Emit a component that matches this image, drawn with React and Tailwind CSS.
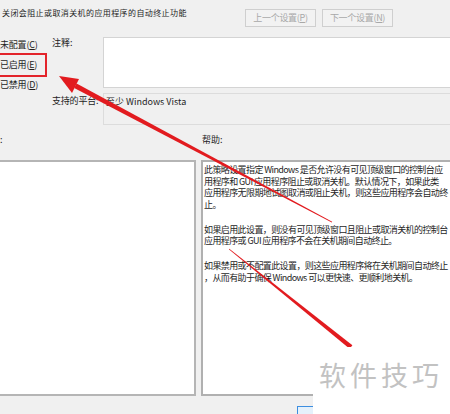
import React from "react";

const HELP = [
  [
    "此策略设置指定 Windows 是否允许没有可见顶级窗口的控制台应",
    "用程序和 GUI 应用程序阻止或取消关机。默认情况下，如果此类",
    "应用程序无限期地试图取消或阻止关机，则这些应用程序会自动终",
    "止。",
  ],
  [
    "如果启用此设置，则没有可见顶级窗口且阻止或取消关机的控制台",
    "应用程序或 GUI 应用程序不会在关机期间自动终止。",
  ],
  [
    "如果禁用或不配置此设置，则这些应用程序将在关机期间自动终止",
    "，从而有助于确保 Windows 可以更快速、更顺利地关机。",
  ],
];

const RADIOS = [
  { label: "未配置", key: "C" },
  { label: "已启用", key: "E" },
  { label: "已禁用", key: "D" },
];

function NavButton({ label, hotkey }) {
  return (
    <div className="mt-[9px] flex h-[18px] w-[71px] items-center justify-center border border-[#cfcfcf] bg-[#f2f2f2] tracking-[-0.3px] text-[#a8a8a8]">
      {label}(<u>{hotkey}</u>)
    </div>
  );
}

function Arrows() {
  return (
    <svg
      className="pointer-events-none absolute left-0 top-0"
      width="450"
      height="414"
      viewBox="0 0 450 414"
    >
      {/* arrow pointing at the enabled option */}
      <polygon points="59,76 79,79 72,93" fill="#e21b1f" />
      <polygon
        points="74.2,88 76.6,83.6 332.2,221.7 331.8,222.4"
        fill="#e21b1f"
      />
      {/* second stroke, tail under the watermark */}
      <polygon
        points="228.8,249.3 229.3,248.7 352.4,345.2 349.6,348.8"
        fill="#e21b1f"
      />
    </svg>
  );
}

export default function App() {
  return (
    <div
      className="relative h-[414px] w-[450px] overflow-hidden bg-[#f0f0f0] text-[9px] leading-[12px] text-[#1e1e1e]"
      style={{ fontFamily: '"Noto Sans CJK SC", "Noto Sans", sans-serif' }}
    >
      <div className="-ml-[20px] flex w-[520px] flex-col">
        {/* header */}
        <div className="flex h-[37px] items-start">
          <div className="mt-[7px] w-[265px] whitespace-nowrap pl-[22px] text-[8px] tracking-[0.4px]">
            关闭会阻止或取消关机的应用程序的自动终止功能
          </div>
          <div className="flex gap-[6px]">
            <NavButton label="上一个设置" hotkey="P" />
            <NavButton label="下一个设置" hotkey="N" />
          </div>
        </div>

        {/* options + comment */}
        <div className="flex">
          <div className="-mt-[2px] flex w-[72px] flex-col pl-[4px]">
            {RADIOS.map((r) => (
              <div key={r.key} className="flex h-[20px] items-center gap-[5px]">
                <span className="h-[11px] w-[11px] rounded-full border border-[#333] bg-white" />
                <span className="whitespace-nowrap tracking-[-0.2px]">
                  {r.label}(<u>{r.key}</u>)
                </span>
              </div>
            ))}
          </div>
          <div className="flex flex-1 flex-col">
            <div className="flex">
              <div className="w-[51px] whitespace-nowrap">注释:</div>
              <div className="h-[51px] flex-1 border border-[#d4d4d4] bg-white" />
            </div>
            <div className="mt-[5px] flex">
              <div className="w-[51px] whitespace-nowrap pt-[2px] tracking-[-0.2px]">支持的平台:</div>
              <div className="h-[32px] flex-1 whitespace-nowrap border border-[#dcdcdc] pl-[2px] pt-[2px]">
                至少 Windows Vista
              </div>
            </div>
          </div>
        </div>

        {/* panel labels */}
        <div className="mt-[9px] flex h-[12px]">
          <div className="w-[222px] pl-[2px]">选项:</div>
          <div>帮助:</div>
        </div>

        {/* panels */}
        <div className="mt-[14px] flex h-[236px] gap-[5px]">
          <div className="w-[216px] border-2 border-[#b5b5b5] bg-white" />
          <div className="w-[280px] overflow-hidden border-2 border-[#b0b0b0] bg-white pl-[1px] pt-[2px] leading-[11.5px] tracking-[-0.6px]">
            {HELP.map((para, i) => (
              <div key={i} className={i > 0 ? "mt-[13.5px]" : ""}>
                {para.map((line) => (
                  <div key={line} className="whitespace-nowrap">
                    {line}
                  </div>
                ))}
              </div>
            ))}
          </div>
        </div>

        {/* bottom buttons */}
        <div className="mt-[10px] flex pl-[317px]">
          <div className="h-[22px] w-[75px] border border-[#3d8ee0] bg-[#e5f1fb]" />
        </div>
      </div>

      {/* annotations */}
      <div className="absolute left-[-4px] top-[53px] h-[24px] w-[51px] border-2 border-[#e3242b]" />
      <Arrows />
      <div className="absolute left-[313px] top-[347px] flex h-[67px] w-[137px] items-start bg-white pl-[6px] pt-[13px]">
        <span className="whitespace-nowrap text-[27px] leading-[30px] tracking-[4px] text-[#c2c2c2]">
          软件技巧
        </span>
      </div>
    </div>
  );
}
